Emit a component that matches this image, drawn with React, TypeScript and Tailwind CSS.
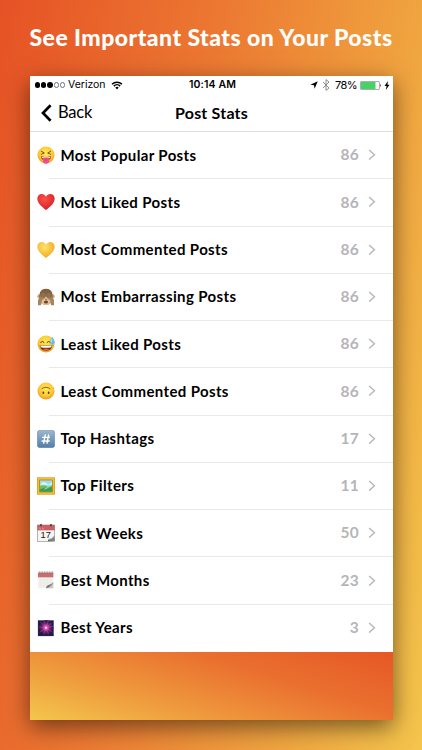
import type { ReactNode } from 'react';

interface StatRow {
  label: string;
  count: number;
  icon: ReactNode;
}

function FaceBase({ id }: { id: string }) {
  return (
    <>
      <defs>
        <radialGradient id={id} cx="50%" cy="38%" r="62%">
          <stop offset="0" stopColor="#ffe95e" />
          <stop offset="0.65" stopColor="#fdc934" />
          <stop offset="1" stopColor="#ee9420" />
        </radialGradient>
      </defs>
      <circle cx="27" cy="27" r="25.5" fill={`url(#${id})`} />
    </>
  );
}

function TongueFace() {
  return (
    <>
      <FaceBase id="tongue-face" />
      <path d="M13 16l9 5-9 4M41 16l-9 5 9 4" fill="none" stroke="#65390f" strokeWidth="2.5" strokeLinecap="round" strokeLinejoin="round" />
      <path d="M12 31q15 5 30 0-1 13-15 13T12 31z" fill="#69320f" />
      <path d="M14 32q13 4 26 0l-1 4q-12 3-24 0z" fill="#fff" />
      <path d="M18 36q9-3 18 0v9q0 8-9 8t-9-8z" fill="#f0508a" />
      <path d="M27 38v7" stroke="#c42f60" strokeWidth="2" />
    </>
  );
}

function Heart({ id, light, dark }: { id: string; light: string; dark: string }) {
  return (
    <>
      <defs>
        <radialGradient id={id} cx="42%" cy="32%" r="68%">
          <stop offset="0" stopColor={light} />
          <stop offset="1" stopColor={dark} />
        </radialGradient>
      </defs>
      <path d="M27 51C19 44 1 32 1 17 1 8 7 3 14 3c6 0 10 3 13 8 3-5 7-8 13-8 7 0 13 5 13 14 0 15-18 27-26 34z" fill={`url(#${id})`} />
    </>
  );
}

function Monkey() {
  return (
    <>
      <circle cx="7" cy="25" r="6" fill="#cfa67a" />
      <circle cx="47" cy="25" r="6" fill="#cfa67a" />
      <path d="M27 2C13 2 7 12 7 25c0 15 7 26 20 26s20-11 20-26C47 12 41 2 27 2z" fill="#80603e" />
      <path d="M11 35q0-9 16-9t16 9q0 16-16 16T11 35z" fill="#dfc09a" />
      <path d="M3 52V38q0-7 6-9l3-12q8-3 13 1v10q-3 6-10 8l-3 16zM51 52V38q0-7-6-9l-3-12q-8-3-13 1v10q3 6 10 8l3 16z" fill="#a58460" />
      <path d="M14 17v12M18 17v12M22 18v11M40 17v12M36 17v12M32 18v11" stroke="#644a2c" strokeWidth="1.4" />
      <path d="M24 33l3 2 3-2" fill="none" stroke="#73491f" strokeWidth="2" />
      <ellipse cx="27" cy="42" rx="6" ry="4.5" fill="#703d27" />
    </>
  );
}

function SweatFace() {
  return (
    <>
      <FaceBase id="sweat-face" />
      <path d="M11 22q5-6 10 0M30 22q5-6 10 0" fill="none" stroke="#65390f" strokeWidth="3" strokeLinecap="round" />
      <path d="M8 30q19 4 38 0-1 17-19 17T8 30z" fill="#69320f" />
      <path d="M10 31q17 4 34 0l-1 6q-16 3-32 0z" fill="#fff" />
      <path d="M17 43q10-5 20 0-10 6-20 0z" fill="#ec5a57" />
      <path d="M45 5q9 11 8 17a7 7 0 0 1-14 0Q39 17 45 5z" fill="#65bce6" />
      <path d="M45 13q-3 6-2 9" fill="none" stroke="#c7edfb" strokeWidth="2.5" strokeLinecap="round" />
    </>
  );
}

function UpsideDownFace() {
  return (
    <>
      <FaceBase id="upside-face" />
      <ellipse cx="19" cy="32" rx="2.6" ry="3.8" fill="#65390f" />
      <ellipse cx="35" cy="32" rx="2.6" ry="3.8" fill="#65390f" />
      <path d="M15 20q12-9 24 0" fill="none" stroke="#75430f" strokeWidth="2.4" strokeLinecap="round" />
    </>
  );
}

function Hashtag() {
  return (
    <>
      <defs>
        <linearGradient id="keycap" x2="0" y2="1">
          <stop stopColor="#9db8d0" />
          <stop offset="1" stopColor="#527da5" />
        </linearGradient>
      </defs>
      <rect x="0.7" y="0.7" width="52.6" height="52.6" rx="9" fill="url(#keycap)" stroke="#62809f" strokeWidth="1.4" />
      <path d="M25 13l-5 28M35 13l-5 28M15 22h24M14 33h24" fill="none" stroke="#fff" strokeWidth="4.2" />
    </>
  );
}

function Picture() {
  return (
    <>
      <rect y="1" width="54" height="52" fill="#d39b20" />
      <rect x="2" y="3" width="50" height="48" fill="#f1c03a" />
      <rect x="7" y="8" width="40" height="38" fill="#a87218" />
      <rect x="9" y="10" width="36" height="34" fill="#9cdceb" />
      <path d="M12 20q8-8 16-1t17-4v8H12z" fill="#e4f5ee" />
      <path d="M9 27q12-5 20 1t16-4v20H9z" fill="#72bf59" />
      <path d="M9 37q17-8 36-6v13H9z" fill="#3c9c4c" />
      <path d="M24 34q8-5 13-2-12 3-15 7z" fill="#9ce0de" />
    </>
  );
}

function TearOffCalendar() {
  return (
    <>
      <rect x="1" y="3" width="52" height="49" fill="#f5f5f3" stroke="#777" strokeWidth="1.6" />
      <path d="M1 3h52v16H1z" fill="#c95f63" />
      <path d="M8 10v5h4M17 10v5h4" fill="none" stroke="#efb7b7" strokeWidth="1.5" />
      <path d="M12 0v7M42 0v7" stroke="#382c2c" strokeWidth="4" />
      <text x="26" y="43" textAnchor="middle" fill="#222" className="font-['Liberation_Sans'] text-[28px]">17</text>
      <path d="M53 34L36 52q5-1 17-1z" fill="#838383" />
      <path d="M33 52q-1-7 6-8 8-1 14-11-5 15-20 19z" fill="#4c4c4c" />
      <path d="M37 48q8-1 16-11v-4q-7 10-16 12z" fill="#d5d5d5" />
    </>
  );
}

function SpiralCalendar() {
  return (
    <>
      <path d="M3 5h46v47H3z" fill="#f4f3f0" />
      <path d="M3 5h46v14H3z" fill="#cc6d6d" />
      <path d="M7 1v7M12 1v7M17 1v7M22 1v7M27 1v7M32 1v7M37 1v7M42 1v7M47 1v7" stroke="#796e6e" strokeWidth="1.8" />
      <path d="M4 27h44M4 35h44M4 43h44M12 20v31M21 20v31M30 20v31M39 20v31" stroke="#dfdedb" strokeWidth="1" />
      <path d="M49 33L28 52h21z" fill="#c9c8c3" />
      <path d="M27 52q0-8 6-9 9-1 16-9-6 14-22 18z" fill="#77766f" />
    </>
  );
}

function Fireworks() {
  return (
    <>
      <defs>
        <radialGradient id="burst">
          <stop stopColor="#ffe0f8" />
          <stop offset="0.18" stopColor="#e065c4" />
          <stop offset="0.55" stopColor="#73206f" />
          <stop offset="1" stopColor="#211646" />
        </radialGradient>
      </defs>
      <rect x="3" y="4" width="47" height="47" fill="#211646" stroke="#657199" />
      <circle cx="27" cy="26" r="22" fill="url(#burst)" />
      <path d="M27 26L10 9m17 17L20 6m7 20L34 6m-7 20L44 12M27 26l21-4M27 26l19 14M27 26l8 20M27 26L20 47M27 26L8 40m19-14L6 24" stroke="#d75bb5" strokeWidth="1.2" />
      <circle cx="27" cy="26" r="3" fill="#fff0fa" />
      <path d="M4 47h45v3H4z" fill="#17234c" />
    </>
  );
}

const rows: StatRow[] = [
  { label: 'Most Popular Posts', count: 86, icon: <TongueFace /> },
  { label: 'Most Liked Posts', count: 86, icon: <Heart id="red-heart" light="#fc5147" dark="#d61f2a" /> },
  { label: 'Most Commented Posts', count: 86, icon: <Heart id="yellow-heart" light="#ffe36a" dark="#f1aa25" /> },
  { label: 'Most Embarrassing Posts', count: 86, icon: <Monkey /> },
  { label: 'Least Liked Posts', count: 86, icon: <SweatFace /> },
  { label: 'Least Commented Posts', count: 86, icon: <UpsideDownFace /> },
  { label: 'Top Hashtags', count: 17, icon: <Hashtag /> },
  { label: 'Top Filters', count: 11, icon: <Picture /> },
  { label: 'Best Weeks', count: 50, icon: <TearOffCalendar /> },
  { label: 'Best Months', count: 23, icon: <SpiralCalendar /> },
  { label: 'Best Years', count: 3, icon: <Fireworks /> },
];

function StatusBar() {
  return (
    <div className="grid h-[18px] grid-cols-[1fr_auto_1fr] items-center pl-[5px] pr-[3px] font-['Inter',sans-serif] text-[11px] leading-none">
      <div className="flex items-center">
        <div className="mr-[3px] flex gap-[1px]">
          <span className="size-[5.2px] rounded-full bg-black" />
          <span className="size-[5.2px] rounded-full bg-black" />
          <span className="size-[5.2px] rounded-full bg-black" />
          <span className="size-[5.2px] rounded-full border-[0.5px] border-gray-500" />
          <span className="size-[5.2px] rounded-full border-[0.5px] border-gray-500" />
        </div>
        <span className="text-[10.5px]">Verizon</span>
        <svg viewBox="0 0 12 9" className="ml-[5px] h-[9px] w-3">
          <path d="M1 3.2a7.2 7.2 0 0 1 10 0M2.8 5.1a4.6 4.6 0 0 1 6.4 0" fill="none" stroke="#000" strokeWidth="1.5" />
          <path d="M4.3 6.6a2.5 2.5 0 0 1 3.4 0L6 8.5z" />
        </svg>
      </div>
      <span className="text-[10.5px] font-semibold tracking-[0.1px]">10:14 AM</span>
      <div className="flex items-center justify-end">
        <svg viewBox="0 0 9 9" className="mr-[4px] size-[8px]">
          <path d="M8.7.3L5.2 8.6 4.5 4.7.4 4.1z" />
        </svg>
        <svg viewBox="0 0 8 12" className="mr-[5px] h-[12px] w-[8px]">
          <path d="M1 3l6 6-3 2.4V.6L7 3 1 9" fill="none" stroke="#808080" strokeWidth="0.9" />
        </svg>
        <span className="tracking-[-0.6px]">78%</span>
        <svg viewBox="0 0 22 9" className="ml-[3px] h-[9px] w-[22px]">
          <rect x="0.4" y="0.4" width="19" height="8.2" rx="1.2" fill="#fff" stroke="#666" strokeWidth="0.6" />
          <path d="M1 1h14.5v7H1z" fill="#45d464" />
          <path d="M20.2 3q1.5 1.5 0 3z" />
        </svg>
        <svg viewBox="0 0 6 9" className="ml-[2px] h-[9px] w-[6px]">
          <path d="M3.8 0L.6 5h2L1.8 9 5.5 3.7h-2z" />
        </svg>
      </div>
    </div>
  );
}

export default function App() {
  return (
    <div className="h-[750px] w-[422px] overflow-hidden bg-[linear-gradient(101deg,#e65225_0%,#ec7932_40%,#f0a540_75%,#f4c54c_100%)] font-['Lato',sans-serif] text-black">
      <h1 className="flex h-[76px] items-center justify-center whitespace-nowrap pb-[1px] text-[23px] font-black tracking-[0.46px] text-white">
        See Important Stats on Your Posts
      </h1>

      <div className="ml-[30px] flex h-[644px] w-[363px] flex-col bg-white shadow-[0_7px_22px_rgba(0,0,0,0.52)]">
        <StatusBar />

        <div className="grid h-[38px] grid-cols-[1fr_auto_1fr] items-center border-b border-[#dedede] px-[11px]">
          <div className="flex items-center text-[16.5px]">
            <svg viewBox="0 0 11 18" className="mr-[6px] h-[18px] w-[11px]">
              <path d="M9.6 1.2L2 9l7.6 7.8" fill="none" stroke="#000" strokeWidth="2.7" />
            </svg>
            <span className="tracking-[-0.2px]">Back</span>
          </div>
          <h2 className="text-[16px] font-bold tracking-[0.2px]">Post Stats</h2>
        </div>

        <ul className="flex h-[520px] flex-col">
          {rows.map((row, index) => (
            <li key={row.label} className="flex min-h-0 flex-1 pl-[7px]">
              <svg viewBox="0 0 54 54" className="mr-[5.5px] mt-[14px] size-[18px] shrink-0">
                {row.icon}
              </svg>
              <div className="relative flex flex-1 items-center pr-[17px] pb-[1.5px]">
                <span className="flex-1 whitespace-nowrap text-[15px] font-bold tracking-[0.36px]">{row.label}</span>
                <span className="text-[15.5px] font-bold tracking-[0.3px] text-[#b5b5b8]">{row.count}</span>
                <svg viewBox="0 0 8 12" className="ml-[9px] h-[11.5px] w-2">
                  <path d="M1 1l5.5 5L1 11" fill="none" stroke="#bababd" strokeWidth="1.6" />
                </svg>
                {index < rows.length - 1 && <div className="absolute right-0 bottom-0 -left-[12px] h-px bg-[#e9e9e9]" />}
              </div>
            </li>
          ))}
        </ul>

        <div className="flex-1 bg-[linear-gradient(197deg,#e65725_0%,#ea702f_35%,#ef9c3e_70%,#f4c64d_100%)]" />
      </div>
    </div>
  );
}
